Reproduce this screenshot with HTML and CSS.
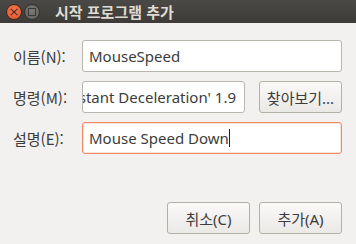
FILE: index.html
```html
<!DOCTYPE html>
<html lang="ko">
<head>
    <meta charset="UTF-8">
    <title>시작 프로그램 추가</title>
    <link rel="stylesheet" href="styles.css">
</head>
<body>
    <div class="window">
        <div class="titlebar">
            <span class="wbtn wbtn-close">&#215;</span>
            <span class="wbtn wbtn-max"><span class="square"></span></span>
            <span class="title">시작 프로그램 추가</span>
        </div>
        <div class="content">
            <div class="form">
                <label class="label">이름(N):</label>
                <div class="entry entry-wide"><span>MouseSpeed</span></div>

                <label class="label">명령(M):</label>
                <div class="entry-row">
                    <div class="entry entry-scroll"><span>nstant Deceleration' 1.9</span></div>
                    <button class="button browse">찾아보기...</button>
                </div>

                <label class="label">설명(E):</label>
                <div class="entry entry-wide entry-focus"><span>Mouse Speed Down</span><span class="caret"></span></div>
            </div>
            <div class="actions">
                <button class="button action">취소(C)</button>
                <button class="button action">추가(A)</button>
            </div>
        </div>
    </div>
</body>
</html>
```

FILE: styles.css
```css
body {
    margin: 0;
    font-family: 'Noto Sans', 'Noto Sans CJK KR', sans-serif;
    background: #f2f1f0;
}

.window {
    width: 356px;
    height: 244px;
    display: flex;
    flex-direction: column;
}

.titlebar {
    height: 23px;
    display: flex;
    align-items: center;
    padding-left: 6px;
    background: linear-gradient(#4a4945, #3c3b37);
}
.wbtn {
    width: 16px;
    height: 16px;
    border-radius: 50%;
    margin-right: 2px;
    display: flex;
    align-items: center;
    justify-content: center;
    box-sizing: border-box;
}
.wbtn-close {
    background: radial-gradient(circle at 50% 40%, #f27b52, #e0502a);
    border: 1px solid #3a2a24;
    color: #4a2a1e;
    font-size: 13px;
    line-height: 1;
    font-family: 'DejaVu Sans', sans-serif;
}
.wbtn-max {
    background: radial-gradient(circle at 50% 40%, #7c7b76, #5f5e5a);
    border: 1px solid #33322f;
}
.wbtn-max .square {
    width: 6px;
    height: 6px;
    border: 1px solid #3a3935;
}
.title {
    margin-left: 13px;
    color: #dfdbd2;
    font-family: 'Noto Sans CJK KR', sans-serif;
    font-weight: bold;
    font-size: 15px;
}

.content {
    flex: 1;
    display: flex;
    flex-direction: column;
    padding: 17px 14px 10px 13px;
}

.form {
    display: grid;
    grid-template-columns: 69px 1fr;
    row-gap: 9px;
    align-items: center;
}
.label {
    color: #3c3c3c;
    font-family: 'Noto Sans CJK KR', sans-serif;
    font-size: 15px;
    white-space: nowrap;
}

.entry {
    height: 32px;
    box-sizing: border-box;
    border: 1px solid #b9b5af;
    border-radius: 3px;
    background: #fff;
    display: flex;
    align-items: center;
    padding: 0 6px;
    font-size: 15px;
    color: #3c3c3c;
    overflow: hidden;
    white-space: nowrap;
}
.entry-row {
    display: flex;
    gap: 14px;
}
.entry-scroll {
    width: 163px;
    justify-content: flex-end;
    padding-right: 8px;
}
.entry-scroll span {
    flex-shrink: 0;
}
.entry-focus {
    border-color: #f08a63;
    box-shadow: inset 0 0 0 1px #fbe3d9;
}
.caret {
    width: 1px;
    height: 18px;
    background: #222;
}

.button {
    font-family: 'Noto Sans', 'Noto Sans CJK KR', sans-serif;
    font-size: 15px;
    color: #3c3c3c;
    height: 32px;
    border: 1px solid #b4b0a8;
    border-radius: 3px;
    background: linear-gradient(#faf9f8, #ebe9e6);
    padding: 0;
}
.browse {
    width: 83px;
}

.actions {
    margin-top: auto;
    display: flex;
    justify-content: flex-end;
    gap: 9px;
}
.action {
    width: 83px;
}
```
